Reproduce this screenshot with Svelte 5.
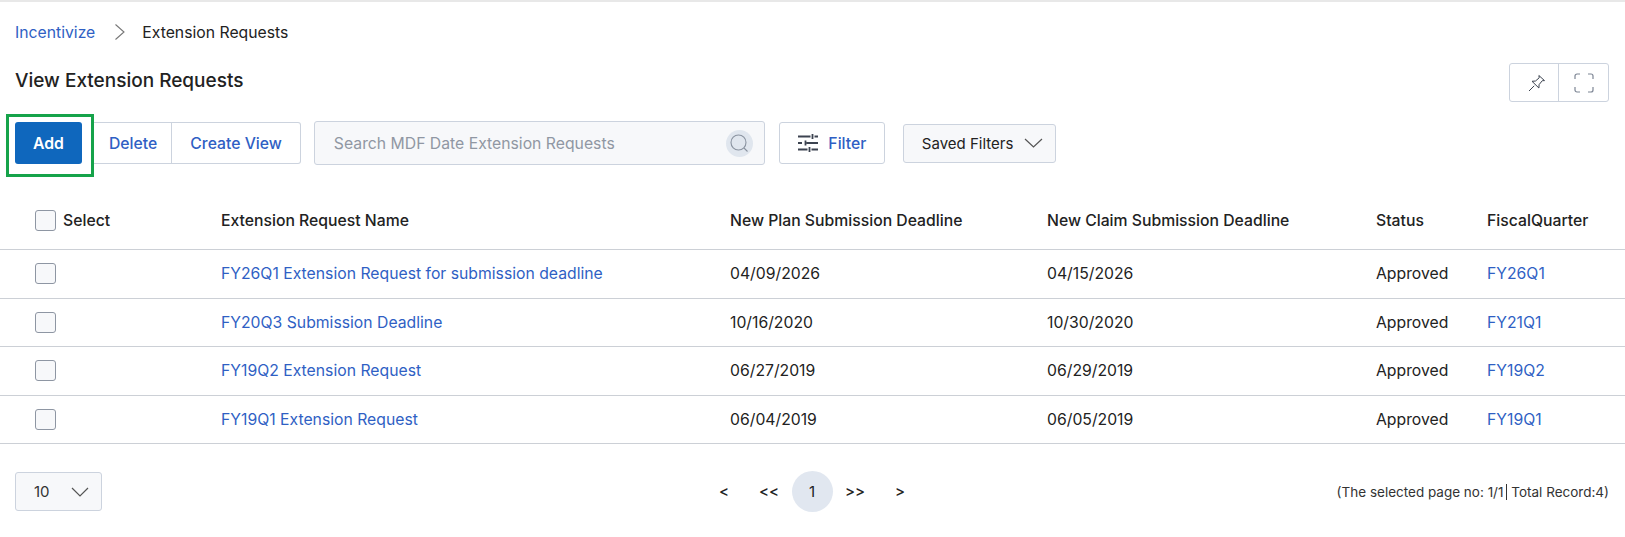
<script lang="ts">
  const rows = [
    { name: 'FY26Q1 Extension Request for submission deadline', plan: '04/09/2026', claim: '04/15/2026', status: 'Approved', fq: 'FY26Q1' },
    { name: 'FY20Q3 Submission Deadline', plan: '10/16/2020', claim: '10/30/2020', status: 'Approved', fq: 'FY21Q1' },
    { name: 'FY19Q2 Extension Request', plan: '06/27/2019', claim: '06/29/2019', status: 'Approved', fq: 'FY19Q2' },
    { name: 'FY19Q1 Extension Request', plan: '06/04/2019', claim: '06/05/2019', status: 'Approved', fq: 'FY19Q1' }
  ];
</script>

<div class="page">
  <nav class="crumbs">
    <a href="#top">Incentivize</a>
    <svg class="sep" width="12" height="18" viewBox="0 0 12 18"><path d="M1.5 1.5 10 9l-8.500 7.500" /></svg>
    <span>Extension Requests</span>
  </nav>

  <div class="title-row">
    <h1>View Extension Requests</h1>
    <div class="view-btns">
      <button class="icon-btn" aria-label="Pin">
        <svg width="18" height="18" viewBox="0 0 18 18"><path d="M1 17l5.200-5.200M4 7.300 7.500 7l3.700-3.200-.3-2.300 5.600 5.100-2.200.1-3.200 3.900-.2 3.400z" /></svg>
      </button>
      <button class="icon-btn" aria-label="Fullscreen">
        <svg class="expand" width="20" height="20" viewBox="0 0 20 20"><path d="M1 6V3a2 2 0 0 1 2-2h3M14 1h3a2 2 0 0 1 2 2v3M19 14v3a2 2 0 0 1-2 2h-3M6 19H3a2 2 0 0 1-2-2v-3" /></svg>
      </button>
    </div>
  </div>

  <div class="toolbar">
    <div class="add-mark"><button class="add">Add</button></div>
    <div class="controls">
      <div class="btn-group">
        <button>Delete</button>
        <button>Create View</button>
      </div>
      <div class="search">
        <span>Search MDF Date Extension Requests</span>
        <span class="search-icon">
          <svg width="20" height="20" viewBox="0 0 20 20"><circle cx="9.500" cy="9.500" r="7.500" /><path d="M15 15l3.500 3.500" /></svg>
        </span>
      </div>
      <button class="filter">
        <svg width="22" height="20" viewBox="0 0 22 20"><path d="M1 3.500h12.500M17.500 3.500h3.500M15.500 1v5M1 10h4M9.500 10h11.500M8.500 7.500v5M1 16.500h9.500M14.500 16.500h6.500M12.500 14v5" /></svg>
        Filter
      </button>
      <div class="saved">
        Saved Filters
        <svg width="19" height="10" viewBox="0 0 19 10"><path d="M1 1l8.500 8 8.500-8" /></svg>
      </div>
    </div>
  </div>

  <table>
    <thead>
      <tr>
        <th class="c1"><span class="sel"><span class="box"></span>Select</span></th>
        <th class="c2">Extension Request Name</th>
        <th class="c3">New Plan Submission Deadline</th>
        <th class="c4">New Claim Submission Deadline</th>
        <th class="c5">Status</th>
        <th>FiscalQuarter</th>
      </tr>
    </thead>
    <tbody>
      {#each rows as r}
        <tr>
          <td><span class="box"></span></td>
          <td><a href="#top">{r.name}</a></td>
          <td>{r.plan}</td>
          <td>{r.claim}</td>
          <td>{r.status}</td>
          <td><a href="#top">{r.fq}</a></td>
        </tr>
      {/each}
    </tbody>
  </table>

  <div class="footer">
    <div class="page-size">
      10
      <svg width="18" height="10" viewBox="0 0 18 10"><path d="M1 1l8 8 8-8" /></svg>
    </div>
    <div class="pager">
      <span>&lt;</span>
      <span>&lt;&lt;</span>
      <span class="current">1</span>
      <span>&gt;&gt;</span>
      <span>&gt;</span>
    </div>
    <div class="summary">(The selected page no: 1/1<span class="bar"></span> Total Record:4)</div>
  </div>
</div>

<style>
  :global(body) {
    margin: 0;
    background: #fff;
    font-family: Inter, "Liberation Sans", sans-serif;
    color: #222;
  }

  .page {
    border-top: 2px solid #e8e8e8;
    font-size: 15.750px;
  }

  a {
    color: #2f5fc4;
    text-decoration: none;
  }

  button {
    font: inherit;
    background: #fff;
    cursor: pointer;
  }

  .crumbs {
    display: flex;
    align-items: center;
    height: 60px;
    padding-left: 15px;
  }

  .sep {
    margin: 0 16px 0 19px;
  }

  .sep path {
    fill: none;
    stroke: #777;
    stroke-width: 1.100;
  }

  .title-row {
    display: flex;
    justify-content: space-between;
    align-items: flex-start;
    padding: 0 16px 0 15px;
    height: 51px;
  }

  h1 {
    margin: 7px 0 0;
    font-size: 19px;
    font-weight: 480;
    line-height: 24px;
  }

  .view-btns {
    display: flex;
    height: 39px;
    margin-top: 1px;
    border: 1px solid #ccd3de;
    border-radius: 3px;
    box-sizing: border-box;
  }

  .icon-btn {
    width: 49px;
    border: 0;
    background: transparent;
    display: flex;
    align-items: center;
    justify-content: center;
    padding: 0;
  }

  .icon-btn:first-child {
    border-right: 1px solid #ccd3de;
    padding-left: 6px;
  }

  .icon-btn svg {
    fill: none;
    stroke: #3c4350;
    stroke-width: 1;
  }

  .icon-btn .expand {
    stroke: #7d8594;
    stroke-width: 1.200;
  }

  .toolbar {
    display: flex;
    align-items: center;
    padding-left: 6px;
    height: 65px;
  }

  .add-mark {
    border: 3px solid #16a34a;
    padding: 5px 6px 10px;
    box-sizing: border-box;
    height: 63px;
    width: 88px;
    background: #fff;
    position: relative;
    z-index: 1;
  }

  .add {
    width: 67px;
    height: 42px;
    border: 0;
    border-radius: 3px;
    background: #0f67bd;
    color: #fff;
    font-weight: 600;
    display: block;
  }

  .controls {
    display: flex;
    align-items: center;
    margin-bottom: 5px;
  }

  .btn-group {
    display: flex;
    height: 42px;
    margin-left: -1px;
    border: 1px solid #ccd3de;
    border-left: 0;
    border-radius: 0 3px 3px 0;
    box-sizing: border-box;
    margin-right: 13px;
  }

  .btn-group button {
    border: 0;
    color: #2f5fc4;
    font-weight: 500;
    background: transparent;
    padding: 0 18px;
  }

  .btn-group button:first-child {
    border-right: 1px solid #ccd3de;
    padding: 0 14px 0 16px;
  }

  .search {
    width: 451px;
    height: 44px;
    box-sizing: border-box;
    display: flex;
    align-items: center;
    justify-content: space-between;
    padding: 0 11px 0 19px;
    margin-right: 14px;
    background: #f7f8fa;
    border: 1px solid #ccd3de;
    border-radius: 3px;
    color: #9097a3;
  }

  .search-icon {
    width: 27px;
    height: 27px;
    border-radius: 50%;
    background: #e0e6ee;
    display: flex;
    align-items: center;
    justify-content: center;
  }

  .search-icon svg {
    fill: none;
    stroke: #8a93a0;
    stroke-width: 1.100;
  }

  .filter {
    height: 42px;
    width: 106px;
    box-sizing: border-box;
    border: 1px solid #ccd3de;
    border-radius: 3px;
    color: #2f5fc4;
    font-weight: 500;
    display: flex;
    align-items: center;
    justify-content: center;
    gap: 9px;
    padding: 0;
    margin-right: 18px;
  }

  .filter svg {
    fill: none;
    stroke: #3c4350;
    stroke-width: 1.800;
  }

  .saved {
    height: 39px;
    width: 153px;
    box-sizing: border-box;
    display: flex;
    align-items: center;
    justify-content: space-between;
    padding: 0 12px 0 18px;
    background: #f7f8fa;
    border: 1px solid #ccd3de;
    border-radius: 3px;
    font-size: 15px;
  }

  .saved svg, .page-size svg {
    fill: none;
    stroke: #555;
    stroke-width: 1.200;
  }

  table {
    width: 100%;
    margin-top: 13px;
    border-collapse: collapse;
    table-layout: fixed;
  }

  th {
    font-weight: 450;
    text-align: left;
    height: 58px;
    padding: 0;
  }

  td {
    height: 47.500px;
    padding: 0;
  }

  tr {
    border-bottom: 1px solid #ccd0d6;
  }

  .c1 { width: 186px; }
  .c2 { width: 509px; }
  .c3 { width: 317px; }
  .c4 { width: 329px; }
  .c5 { width: 111px; }

  th:first-child, td:first-child {
    padding-left: 35px;
  }

  .sel {
    display: flex;
    align-items: center;
    gap: 7px;
  }

  .box {
    display: block;
    width: 21px;
    height: 21px;
    box-sizing: border-box;
    background: #f7f8fa;
    border: 1px solid #8e96a3;
    border-radius: 3px;
  }

  .footer {
    display: grid;
    grid-template-columns: 1fr auto 1fr;
    align-items: center;
    padding: 27px 16px 0 15px;
  }

  .page-size {
    width: 87px;
    height: 39px;
    box-sizing: border-box;
    display: flex;
    align-items: center;
    justify-content: space-between;
    padding: 0 12px 0 18px;
    background: #f7f8fa;
    border: 1px solid #ccd3de;
    border-radius: 3px;
    font-size: 15px;
    color: #333;
  }

  .pager {
    display: flex;
    align-items: center;
    font-size: 15px;
    font-weight: 500;
    color: #222;
  }

  .pager span {
    min-width: 45px;
    text-align: center;
  }

  .pager .current {
    min-width: 41px;
    height: 41px;
    line-height: 41px;
    border-radius: 50%;
    background: #e1e7f0;
    font-weight: 400;
  }

  .summary {
    text-align: right;
    font-size: 13.500px;
    color: #333;
  }

  .bar {
    display: inline-block;
    height: 16px;
    margin-left: 3px;
    border-left: 1px solid #333;
    vertical-align: -3px;
  }
</style>
